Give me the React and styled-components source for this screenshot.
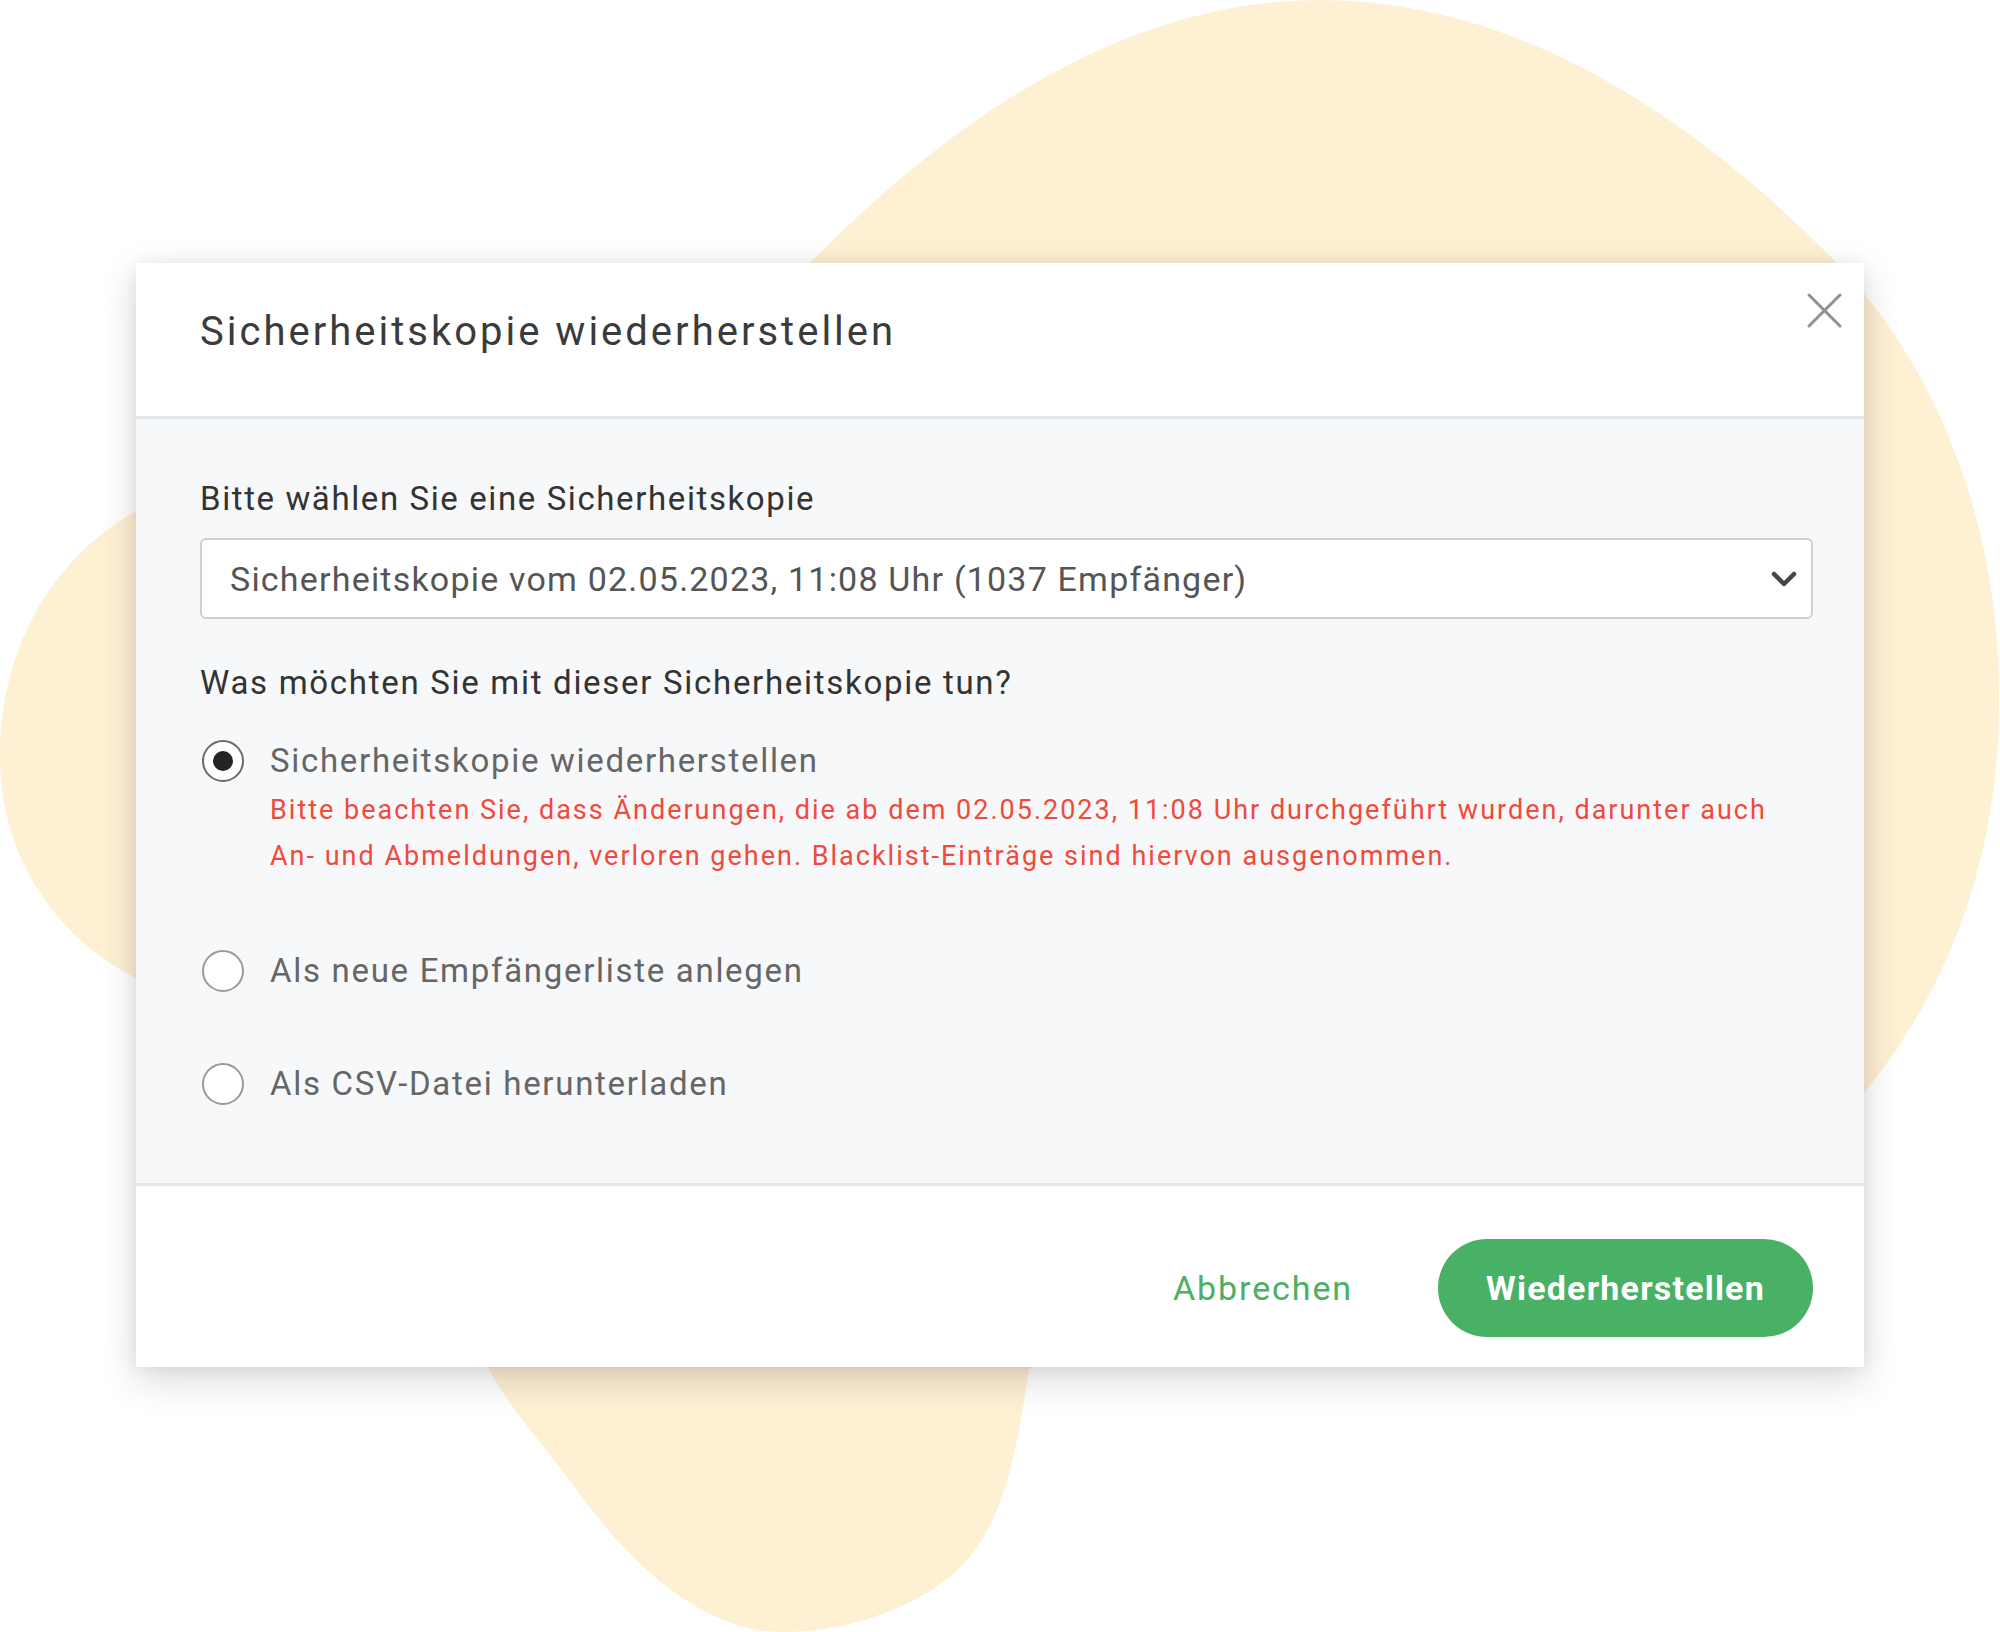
import React, { useState } from 'react';
import styled, { createGlobalStyle } from 'styled-components';

const GlobalStyle = createGlobalStyle`
  html, body {
    margin: 0;
    padding: 0;
    background: #ffffff;
  }
  body {
    font-family: Roboto, "Liberation Sans", sans-serif;
  }
`;

const OPTIONS = [
  {
    id: 'restore',
    label: 'Sicherheitskopie wiederherstellen',
    warning: [
      'Bitte beachten Sie, dass Änderungen, die ab dem 02.05.2023, 11:08 Uhr durchgeführt wurden, darunter auch',
      'An- und Abmeldungen, verloren gehen. Blacklist-Einträge sind hiervon ausgenommen.',
    ],
  },
  { id: 'newlist', label: 'Als neue Empfängerliste anlegen' },
  { id: 'csv', label: 'Als CSV-Datei herunterladen' },
];

function Blob() {
  return (
    <BlobSvg viewBox="0 0 2000 1632" width="2000" height="1632" aria-hidden="true">
      <path
        d="M 810 263 Q 1068 0 1320 0 Q 1578 0 1837 263
           C 1940 370 2000 530 1999 697
           C 2000 870 1940 1000 1864 1093
           L 1029 1369
           C 1010 1500 990 1555 927 1593
           C 880 1620 830 1632 782 1632
           C 720 1632 650 1590 579 1493
           C 545 1445 510 1410 489 1369
           L 136 978
           C 60 940 0 860 0 757
           C 0 650 50 560 136 511
           Z"
        fill="#fef0d3"
      />
    </BlobSvg>
  );
}

function CloseIcon() {
  return (
    <svg width="37" height="37" viewBox="0 0 37 37">
      <path d="M3 3 L34 34 M34 3 L3 34" stroke="#8d9297" strokeWidth="3" strokeLinecap="round" />
    </svg>
  );
}

function Chevron() {
  return (
    <svg width="26" height="18" viewBox="0 0 26 18">
      <polyline points="3,4 13,14 23,4" fill="none" stroke="#454545" strokeWidth="4.5" strokeLinecap="round" strokeLinejoin="round" />
    </svg>
  );
}

export default function App() {
  const [choice, setChoice] = useState('restore');

  return (
    <Page>
      <GlobalStyle />
      <Blob />
      <Dialog>
        <Header>
          <Title>Sicherheitskopie wiederherstellen</Title>
          <CloseButton type="button" aria-label="Schließen">
            <CloseIcon />
          </CloseButton>
        </Header>

        <Body>
          <FieldLabel>Bitte wählen Sie eine Sicherheitskopie</FieldLabel>
          <Select>
            <SelectText>Sicherheitskopie vom 02.05.2023, 11:08 Uhr (1037 Empfänger)</SelectText>
            <Chevron />
          </Select>

          <Question>Was möchten Sie mit dieser Sicherheitskopie tun?</Question>
          <OptionList>
            {OPTIONS.map((opt) => (
              <OptionRow key={opt.id} onClick={() => setChoice(opt.id)}>
                <RadioCircle checked={choice === opt.id} />
                <OptionText>
                  <OptionLabel>{opt.label}</OptionLabel>
                  {opt.warning && (
                    <Warning>
                      {opt.warning.map((line) => (
                        <div key={line}>{line}</div>
                      ))}
                    </Warning>
                  )}
                </OptionText>
              </OptionRow>
            ))}
          </OptionList>
        </Body>

        <Footer>
          <CancelButton type="button">Abbrechen</CancelButton>
          <PrimaryButton type="button">Wiederherstellen</PrimaryButton>
        </Footer>
      </Dialog>
    </Page>
  );
}

/* Style */
const Page = styled.div`
  position: relative;
  width: 2000px;
  height: 1632px;
  overflow: hidden;
  padding: 263px 0 0 136px;
  box-sizing: border-box;
`;

const BlobSvg = styled.svg`
  position: absolute;
  left: 0;
  top: 0;
`;

const Dialog = styled.div`
  position: relative;
  width: 1728px;
  background: #ffffff;
  box-shadow: 0 12px 36px rgba(0, 0, 0, 0.16), 0 0 14px rgba(0, 0, 0, 0.06);
  display: flex;
  flex-direction: column;
`;

const Header = styled.div`
  height: 156px;
  box-sizing: border-box;
  padding: 45px 64px 0;
  border-bottom: 3px solid #e4e8ec;
`;

const Title = styled.h2`
  margin: 0;
  font-size: 40px;
  line-height: 48px;
  font-weight: 400;
  color: #3b3b3b;
  letter-spacing: 3px;
`;

const CloseButton = styled.button`
  position: absolute;
  top: 29px;
  right: 21px;
  padding: 0;
  border: 0;
  background: transparent;
  line-height: 0;
  cursor: pointer;
`;

const Body = styled.div`
  background: #f6f8fa;
  padding: 60px 51px 78px 64px;
  display: flex;
  flex-direction: column;
  border-bottom: 3px solid #e4e8ec;
`;

const FieldLabel = styled.div`
  font-size: 33px;
  line-height: 40px;
  color: #333333;
  letter-spacing: 1.6px;
`;

const Select = styled.div`
  margin-top: 19px;
  height: 81px;
  box-sizing: border-box;
  border: 2px solid #cdd1d6;
  border-radius: 6px;
  background: #ffffff;
  padding: 0 14px 0 28px;
  display: flex;
  align-items: center;
  justify-content: space-between;
`;

const SelectText = styled.span`
  font-size: 34px;
  color: #555555;
  letter-spacing: 1.2px;
`;

const Question = styled.div`
  margin-top: 44px;
  font-size: 33px;
  line-height: 40px;
  color: #333333;
  letter-spacing: 1.7px;
`;

const OptionList = styled.div`
  margin-top: 38px;
  display: flex;
  flex-direction: column;
  gap: 72px;
`;

const OptionRow = styled.label`
  display: flex;
  align-items: flex-start;
  gap: 26px;
  padding-left: 2px;
  cursor: pointer;
`;

const RadioCircle = styled.span`
  flex: none;
  width: 42px;
  height: 42px;
  box-sizing: border-box;
  border-radius: 50%;
  border: 2px solid ${(p) => (p.checked ? '#6b6b6b' : '#9a9a9a')};
  background: #ffffff;
  display: flex;
  align-items: center;
  justify-content: center;
  margin-top: -1px;

  &::after {
    content: '';
    width: 20px;
    height: 20px;
    border-radius: 50%;
    background: #232323;
    display: ${(p) => (p.checked ? 'block' : 'none')};
  }
`;

const OptionText = styled.div`
  display: flex;
  flex-direction: column;
  gap: 6px;
`;

const OptionLabel = styled.div`
  font-size: 33px;
  line-height: 40px;
  color: #666666;
  letter-spacing: 1.7px;
`;

const Warning = styled.div`
  font-size: 27px;
  line-height: 46px;
  color: #f1493a;
  letter-spacing: 2px;
`;

const Footer = styled.div`
  height: 181px;
  box-sizing: border-box;
  padding: 53px 51px 0 0;
  display: flex;
  align-items: flex-start;
  justify-content: flex-end;
  gap: 77px;
`;

const CancelButton = styled.button`
  height: 98px;
  padding: 0 8px;
  border: 0;
  background: transparent;
  font-family: Roboto, "Liberation Sans", sans-serif;
  font-size: 34px;
  color: #4bb062;
  letter-spacing: 1.9px;
  cursor: pointer;
`;

const PrimaryButton = styled.button`
  width: 375px;
  height: 98px;
  border: 0;
  border-radius: 49px;
  background: #48b166;
  color: #ffffff;
  font-family: Roboto, "Liberation Sans", sans-serif;
  font-size: 34px;
  font-weight: 700;
  letter-spacing: 1.2px;
  cursor: pointer;
`;
